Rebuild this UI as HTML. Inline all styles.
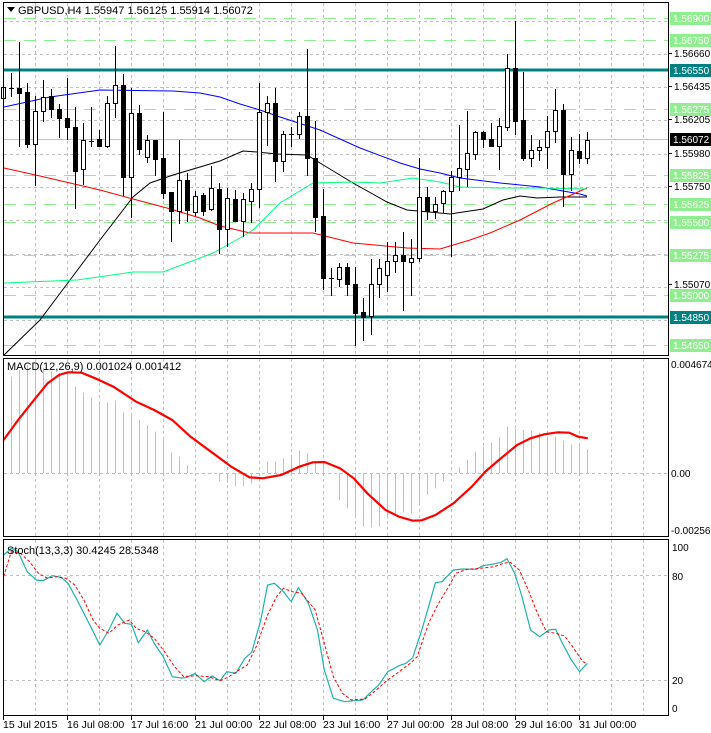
<!DOCTYPE html>
<html><head><meta charset="utf-8"><style>
html,body{margin:0;padding:0;background:#fff;width:711px;height:733px;overflow:hidden}
svg{display:block;font-family:"Liberation Sans",sans-serif;font-size:11px}
</style></head><body>
<svg id="s" width="711" height="733" viewBox="0 0 711 733" xmlns="http://www.w3.org/2000/svg">
<rect width="711" height="733" fill="#fff"/>
<g id="grid"></g>
<g id="lv"></g>
<g id="ma"></g>
<g id="cd"></g>
<g id="mc"></g>
<g id="st"></g>
<g id="fr" fill="none" stroke="#000" stroke-width="1">
<rect x="3.5" y="2.5" width="665" height="353"/>
<rect x="3.5" y="358.5" width="665" height="178"/>
<rect x="3.5" y="539.5" width="665" height="176"/>
</g>
<g id="ax" font-size="10"></g>
<polygon points="7,7 15,7 11,12" fill="#000"/>
<text x="18" y="14" fill="#000">GBPUSD,H4  1.55947 1.56125 1.55914 1.56072</text>
<text x="7" y="370" fill="#000">MACD(12,26,9) 0.001024 0.001412</text>
<text x="7" y="554" fill="#000">Stoch(13,3,3) 30.4245 28.5348</text>
<g fill="#000" font-size="10">
<text x="671" y="368">0.004674</text>
<text x="671" y="477">0.00</text>
<text x="671" y="534">-0.002562</text>
<text x="672" y="551">100</text>
<text x="672" y="580">80</text>
<text x="672" y="684">20</text>
<text x="672" y="712">0</text>
</g>
<g fill="#000" font-size="10.5">
<text x="3" y="728">15 Jul 2015</text>
<text x="67" y="728">16 Jul 08:00</text>
<text x="131" y="728">17 Jul 16:00</text>
<text x="195" y="728">21 Jul 00:00</text>
<text x="259" y="728">22 Jul 08:00</text>
<text x="323" y="728">23 Jul 16:00</text>
<text x="387" y="728">27 Jul 00:00</text>
<text x="451" y="728">28 Jul 08:00</text>
<text x="515" y="728">29 Jul 16:00</text>
<text x="579" y="728">31 Jul 00:00</text>
</g>
</svg>
<script>
var NS="http://www.w3.org/2000/svg";
function el(p,t,a,txt){var e=document.createElementNS(NS,t);for(var k in a)e.setAttribute(k,a[k]);if(txt)e.textContent=txt;document.getElementById(p).appendChild(e);return e;}
for(var k=1;k<=20;k++){var x=3.5+32*k;
 el('grid','line',{x1:x,y1:3,x2:x,y2:355,stroke:'#c0c0c0','stroke-dasharray':'3,3'});
 el('grid','line',{x1:x,y1:359,x2:x,y2:536,stroke:'#c0c0c0','stroke-dasharray':'3,3'});
 el('grid','line',{x1:x,y1:540,x2:x,y2:715,stroke:'#c0c0c0','stroke-dasharray':'3,3'});
}
for(var i=0;i<10;i++){var y=Math.round(20.5+33.3*i)+0.5;el('grid','line',{x1:4,y1:y,x2:668,y2:y,stroke:'#c0c0c0','stroke-dasharray':'3,3'});}
el('grid','line',{x1:4,y1:473.5,x2:668,y2:473.5,stroke:'#c0c0c0','stroke-dasharray':'3,3'});
[575.5,680.5].forEach(function(y){el('grid','line',{x1:4,y1:y,x2:668,y2:y,stroke:'#c0c0c0','stroke-dasharray':'3,3'});});
var G=[[18,'1.56900'],[40,'1.56750'],[109,'1.56275'],[175,'1.55825'],[204,'1.55625'],[222,'1.55500'],[255,'1.55275'],[295,'1.55000'],[345,'1.54650']];
G.forEach(function(g){el('lv','line',{x1:4,y1:g[0]+.5,x2:668,y2:g[0]+.5,stroke:'#90ee90','stroke-dasharray':'12,8'});});
el('lv','line',{x1:4,y1:139.5,x2:668,y2:139.5,stroke:'#c0c0c0'});
[[70,'1.56550'],[317,'1.54850']].forEach(function(g){el('lv','rect',{x:4,y:g[0]-1.5,width:664,height:3,fill:'#008080'});});
var B=[[53,'1.56660'],[86,'1.56435'],[119,'1.56205'],[153,'1.55980'],[186,'1.55750'],[284,'1.55070']];
B.forEach(function(b){el('ax','line',{x1:669,y1:b[0]+.5,x2:672,y2:b[0]+.5,stroke:'#000'});el('ax','text',{x:674,y:b[0]+4,fill:'#000'},b[1]);});
function box(y,t,bg,fg){el('ax','rect',{x:670,y:y-6,width:41,height:13,fill:bg});el('ax','text',{x:673,y:y+4,fill:fg},t);}
G.forEach(function(g){box(g[0],g[1],'#90ee90','#fff');});
box(70,'1.56550','#008080','#fff');box(317,'1.54850','#008080','#fff');
box(139,'1.56072','#000','#fff');
[3,67,131,195,259,323,387,451,515,579].forEach(function(x){el('ax','line',{x1:x+.5,y1:716,x2:x+.5,y2:720,stroke:'#000'});});
function pl(p,pts,col,w,dash){var a={points:pts.map(function(q){return q.join(',')}).join(' '),fill:'none',stroke:col,'stroke-width':w||1};if(dash)a['stroke-dasharray']=dash;el(p,'polyline',a);}
pl('ma',[[4,107],[50,97],[100,90],[173,91],[200,93],[220,97],[240,104],[260,110],[280,117],[320,130],[360,148],[400,163],[420,169],[440,173],[460,178],[500,183],[540,187],[580,194],[587,196]],'#0000ff');
pl('ma',[[4,355],[40,320],[70,280],[100,240],[133,197],[150,183],[173,175],[200,167],[220,161],[243,151],[257,152],[277,154],[307,155],[320,163],[353,183],[387,202],[407,210],[440,213],[450,214],[483,209],[503,200],[520,196],[537,198],[560,197],[587,197]],'#000');
pl('ma',[[4,168],[40,176],[100,190],[133,199],[167,208],[200,218],[220,226],[250,233],[313,233],[353,243],[407,248],[440,249],[470,240],[490,233],[520,220],[553,203],[587,188]],'#ff0000');
pl('ma',[[4,283],[77,280],[133,272],[163,272],[187,263],[213,253],[240,238],[253,230],[280,203],[313,183],[353,182],[380,183],[413,178],[440,182],[460,187],[500,188],[540,188],[587,189]],'#00ff7f');
var C=[[87,98,80,100,1],[88,88,73,97,2],[88,93,42,147,0],[92,144,83,148,0],[111,144,96,186,1],[97,111,80,122,1],[96,109,89,118,0],[109,118,104,138,0],[118,127,78,140,0],[127,171,107,209,0],[140,169,123,185,1],[141,141,107,147,2],[139,146,130,147,0],[103,146,96,148,1],[85,103,46,118,1],[85,177,74,196,0],[113,177,88,218,1],[113,149,105,155,0],[140,157,135,163,1],[140,159,140,176,0],[158,193,112,199,0],[192,211,192,242,0],[180,211,140,224,1],[180,210,173,222,0],[196,212,191,216,1],[195,211,193,216,0],[188,209,166,211,1],[189,229,183,254,0],[198,229,188,247,1],[199,221,190,222,0],[199,221,193,237,1],[189,201,183,223,1],[112,189,83,208,1],[103,112,96,146,1],[103,161,88,182,0],[134,161,131,172,1],[134,134,127,147,2],[116,134,112,139,1],[116,158,49,176,0],[158,217,121,232,0],[216,278,189,290,0],[278,278,268,296,2],[267,279,263,287,1],[267,284,263,296,0],[284,313,267,346,0],[312,317,298,341,0],[284,316,259,335,1],[268,284,259,298,1],[261,275,242,292,1],[255,261,242,273,1],[255,261,232,311,0],[258,262,239,296,1],[197,258,158,262,1],[197,211,187,220,0],[204,211,197,219,1],[191,203,190,213,1],[177,191,171,257,1],[168,177,125,191,1],[153,169,111,187,1],[132,154,131,160,1],[132,139,131,148,0],[139,146,123,147,0],[126,146,118,170,1],[68,127,54,131,1],[68,121,21,135,0],[120,158,72,161,0],[150,158,135,167,1],[147,150,140,161,1],[131,147,116,169,1],[110,131,89,143,1],[110,174,104,207,0],[150,174,137,191,1],[151,158,134,164,0],[140,158,132,164,1]];
C.forEach(function(c,k){var x=Math.round(3.3+8*k)+.5;
 el('cd','line',{x1:x,y1:c[2],x2:x,y2:c[3],stroke:'#000'});
 if(c[4]==2){el('cd','line',{x1:x-2.5,y1:c[0]+.5,x2:x+2.5,y2:c[0]+.5,stroke:'#000'});}
 else if(c[4]==1){el('cd','rect',{x:x-2,y:c[0]+.5,width:4,height:Math.max(1,c[1]-c[0]),fill:'#fff',stroke:'#000'});}
 else{el('cd','rect',{x:x-2.5,y:c[0],width:5,height:Math.max(1,c[1]-c[0]+1),fill:'#000'});}
});
var H=[115,80,60,45,40,55,65,68,70,110,128,143,158,158,152,188,190,210,225,245,270,308,320,345,370,370,372,395,398,408,408,400,372,335,335,325,320,302,310,340,335,370,450,475,500,530,532,530,505,490,488,490,460,435,415,395,372,352,330,305,290,278,262,230,235,240,242,248,260,260,272,283,283,297];
H.forEach(function(v,k){var x=Math.round(3.3+8*k)+.5;var y=350+v/3;el('mc','line',{x1:x,y1:473,x2:x,y2:y,stroke:'#c0c0c0'});});
function cv(a,sx){return a.map(function(q){return [(q[0]/2.205).toFixed(1),(sx+q[1]/3).toFixed(1)];});}
pl('mc',cv([[8,270],[40,210],[75,150],[105,100],[130,75],[150,67],[180,68],[210,85],[250,110],[300,155],[340,180],[380,210],[420,260],[470,310],[510,350],[550,382],[580,385],[620,375],[660,350],[690,337],[715,336],[750,355],[780,385],[810,430],[850,480],[880,500],[910,512],[930,511],[960,495],[1000,460],[1040,410],[1070,365],[1100,330],[1140,285],[1170,265],[1200,253],[1230,247],[1255,248],[1275,260],[1296,265]],350),'#ff0000',2.2);
pl('st',cv([[8,75],[25,55],[40,65],[60,125],[80,150],[95,152],[115,137],[135,142],[150,160],[170,210],[200,290],[220,345],[240,300],[258,250],[275,280],[290,283],[305,338],[325,300],[340,340],[360,380],[380,440],[400,444],[410,443],[430,430],[450,455],[468,438],[485,452],[500,425],[520,430],[540,385],[555,367],[575,270],[590,165],[605,160],[625,185],[642,215],[658,173],[680,220],[700,300],[715,420],[735,505],[760,515],[780,512],[800,510],[815,490],[835,465],[855,425],[880,407],[895,400],[910,383],[930,300],[945,230],[960,158],[975,155],[985,140],[1000,120],[1020,117],[1050,118],[1065,107],[1085,103],[1105,97],[1118,86],[1135,130],[1150,195],[1170,300],[1190,320],[1210,300],[1225,298],[1240,340],[1260,390],[1278,425],[1295,400]],530),'#20b2aa',1.2);
pl('st',cv([[8,140],[25,65],[45,70],[65,95],[85,130],[105,145],[125,140],[145,145],[165,165],[185,210],[205,270],[220,295],[240,310],[260,285],[285,270],[300,295],[320,305],[340,325],[360,360],[385,410],[405,440],[430,437],[460,440],[485,452],[505,440],[525,422],[545,405],[565,350],[590,255],[610,200],[625,175],[645,185],[665,190],[695,240],[715,340],[735,440],[755,490],[775,510],[805,507],[830,480],[850,455],[880,425],[905,400],[920,380],[945,280],[965,225],[990,168],[1005,130],[1030,118],[1060,115],[1090,110],[1110,100],[1125,97],[1145,120],[1165,180],[1185,250],[1205,305],[1225,310],[1245,318],[1260,345],[1285,395],[1295,400]],530),'#ff0000',1,'3,2');
</script>
</body></html>
